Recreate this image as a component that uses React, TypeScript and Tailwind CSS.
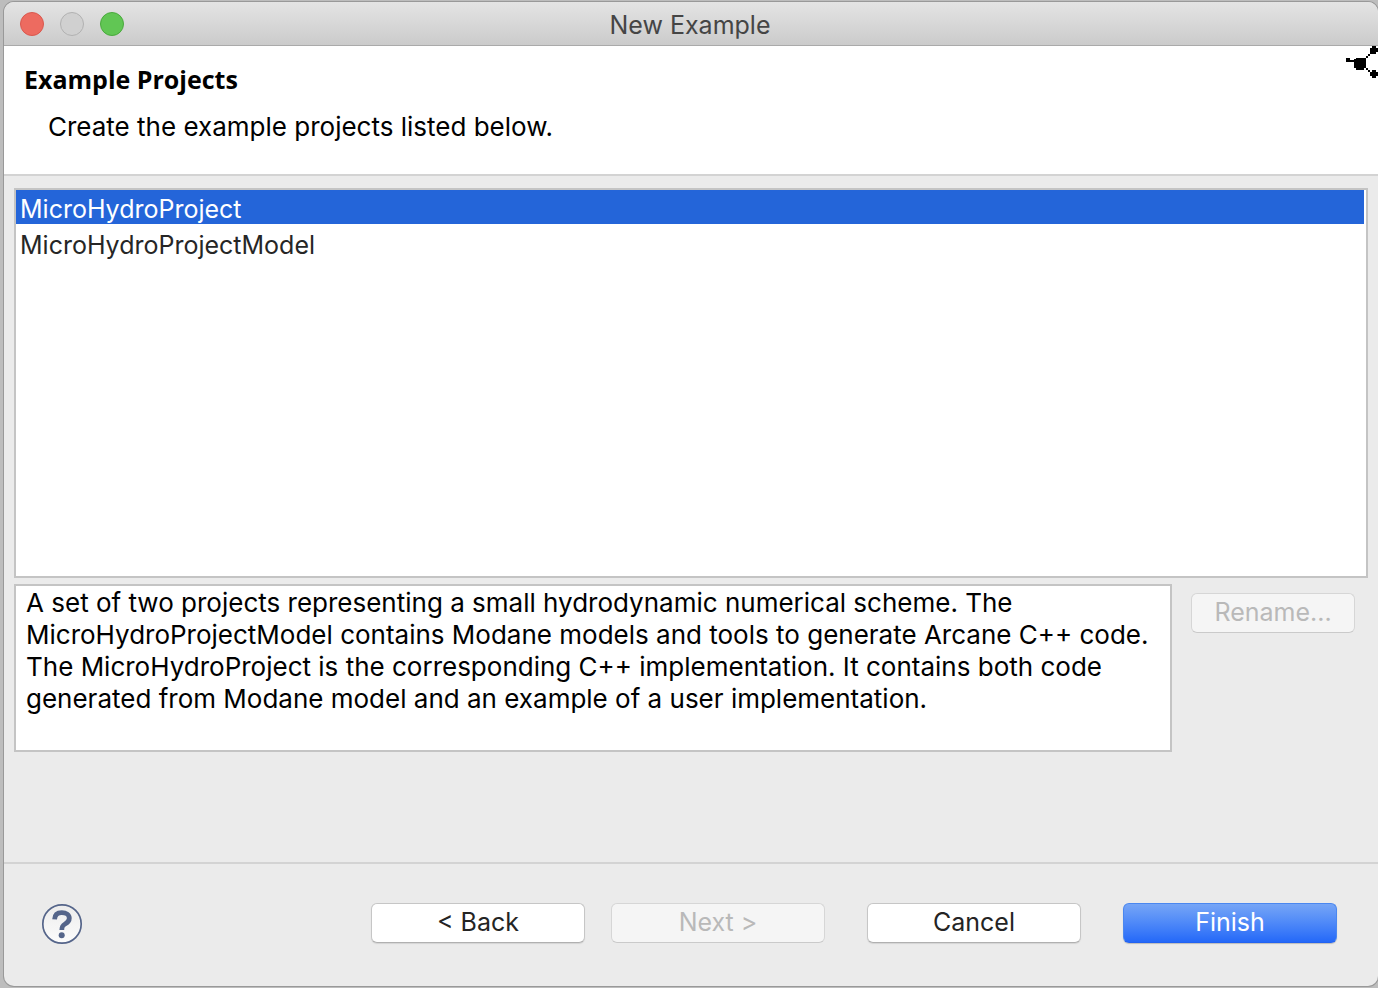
import { useState } from "react";
import type { ButtonHTMLAttributes } from "react";
import { clsx } from "clsx";

const projects = ["MicroHydroProject", "MicroHydroProjectModel"];

const description =
  "A set of two projects representing a small hydrodynamic numerical scheme. The MicroHydroProjectModel contains Modane models and tools to generate Arcane C++ code. The MicroHydroProject is the corresponding C++ implementation. It contains both code generated from Modane model and an example of a user implementation.";

type PushButtonProps = ButtonHTMLAttributes<HTMLButtonElement> & { primary?: boolean };

function PushButton({ primary, className, ...rest }: PushButtonProps) {
  return (
    <button
      type="button"
      className={clsx(
        "h-10 shrink-0 rounded-md border pb-0.5 text-[25px] leading-8",
        primary
          ? "border-[#4a87f0] border-b-[#2262f0] bg-linear-to-b from-[#76a5f6] to-[#2468f8] text-white shadow-[0_1px_1px_#bcbcbc]"
          : "border-[#c6c6c6] border-b-[#b0b0b0] bg-white text-[#242424] shadow-[0_1px_1px_#d4d4d4] disabled:border-[#d6d6d6] disabled:border-b-[#cacaca] disabled:bg-[#f5f5f5] disabled:text-[#b9b9b9] disabled:shadow-none",
        className
      )}
      {...rest}
    />
  );
}

function TitleBar() {
  return (
    <header className="relative flex h-11 shrink-0 items-center gap-4 border-b border-[#aaaaaa] bg-linear-to-b from-[#e4e4e4] to-[#cbcbcb] px-4">
      <button type="button" aria-label="Close" className="size-6 rounded-full border border-[#d9584e] bg-[#ed6b60]" />
      <button type="button" aria-label="Minimize" disabled className="size-6 rounded-full border border-[#b1b1b1] bg-[#d0d0d0]" />
      <button type="button" aria-label="Zoom" className="size-6 rounded-full border border-[#4aa93d] bg-[#61c654]" />
      <h1 className="pointer-events-none absolute inset-x-0 pt-0.5 pr-0.5 text-center text-[25px] leading-8 text-[#454545]">New Example</h1>
    </header>
  );
}

function NodesIcon() {
  return (
    <svg viewBox="0 0 32 32" className="size-8 shrink-0" aria-hidden="true" shapeRendering="crispEdges">
      <path d="M0 12h4v2h4v2h-4v0h-4z" />
      <path d="M10 12h8v1h2v9h-2v2h-8v-2h-2v-9h2z" />
      <path d="M20 10h2v2h-2zM22 8h2v2h-2zM24 6h2v2h-2zM18 12h2v2h-2zM20 22h2v2h-2zM22 24h2v2h-2z" />
      <path d="M26 0h4v2h2v4h-2v2h-4v-2h-2v-4h2z" />
      <path d="M26 24h4v2h2v4h-2v2h-4v-2h-2v-4h2z" />
    </svg>
  );
}

export default function App() {
  const [selected, setSelected] = useState(projects[0]);
  return (
    <div className="flex min-h-screen flex-col bg-[#bdbdbd] pt-0.5 pb-0.5 pl-1 font-['Inter','Liberation_Sans',sans-serif]">
      <main className="flex flex-1 flex-col overflow-hidden rounded-[10px] bg-[#ebebeb] shadow-[0_0_0_1px_#999999]">
        <TitleBar />
        <section className="flex items-start justify-between border-b-2 border-[#d3d3d3] bg-white pb-[31px]">
          <div className="pt-[17px] pl-5">
            <h2 className="font-['Open_Sans','Noto_Sans',sans-serif] text-[25px] leading-8 font-bold text-black">Example Projects</h2>
            <p className="mt-4 pl-6 text-[26px] leading-8 text-black">Create the example projects listed below.</p>
          </div>
          <NodesIcon />
        </section>

        <section className="flex flex-1 flex-col gap-1.5 border-b-2 border-[#d3d3d3] px-2.5 pt-3 pb-[110px]">
          <ul role="listbox" aria-label="Example projects" className="flex flex-1 flex-col gap-0.5 border-2 border-[#c4c4c4] bg-white pr-0.5">
            {projects.map((name) => (
              <li
                key={name}
                role="option"
                tabIndex={0}
                aria-selected={selected === name}
                onClick={() => setSelected(name)}
                className={clsx("h-[34px] cursor-default pt-[3px] pl-1 text-[25px] leading-8", selected === name ? "bg-[#2465d9] text-white" : "text-[#262626]")}
              >
                {name}
              </li>
            ))}
          </ul>
          <div className="flex items-start gap-[19px]">
            <textarea
              readOnly
              aria-label="Description"
              value={description}
              className="h-42 flex-1 resize-none border-2 border-[#c4c4c4] bg-white px-2.5 pt-px text-[26px] leading-8 text-black outline-none"
            />
            <PushButton disabled className="mt-[9px] mr-[13px] w-41">
              Rename...
            </PushButton>
          </div>
        </section>

        <footer className="flex h-[122px] shrink-0 items-center justify-between pr-[41px] pb-1 pl-9">
          <button type="button" aria-label="Help" className="size-11 rounded-full">
            <svg viewBox="0 0 44 44" className="size-11" aria-hidden="true">
              <defs>
                <linearGradient id="help" x1="0" y1="0" x2="0" y2="1">
                  <stop offset="0" stopColor="#ececec" />
                  <stop offset="1" stopColor="#fcfcfc" />
                </linearGradient>
              </defs>
              <circle cx="22" cy="23" r="19.2" fill="url(#help)" stroke="#55658a" strokeWidth="1.7" />
              <path d="M14.600 18.300c.2-4.600 3-6.700 7.200-6.700 4.400 0 7.500 2.100 7.500 5.700 0 3-1.900 4.400-4.200 5.700-2.500 1.400-3.300 2.400-3.300 5.900" fill="none" stroke="#55658a" strokeWidth="4.800" />
              <circle cx="21.700" cy="34.200" r="3" fill="#55658a" />
            </svg>
          </button>
          <div className="flex gap-[42px]">
            <div className="flex gap-[26px]">
              <PushButton className="w-[214px]">&lt; Back</PushButton>
              <PushButton disabled className="w-[214px]">
                Next &gt;
              </PushButton>
            </div>
            <PushButton className="w-[214px]">Cancel</PushButton>
            <PushButton primary className="w-[214px]">
              Finish
            </PushButton>
          </div>
        </footer>
      </main>
    </div>
  );
}
